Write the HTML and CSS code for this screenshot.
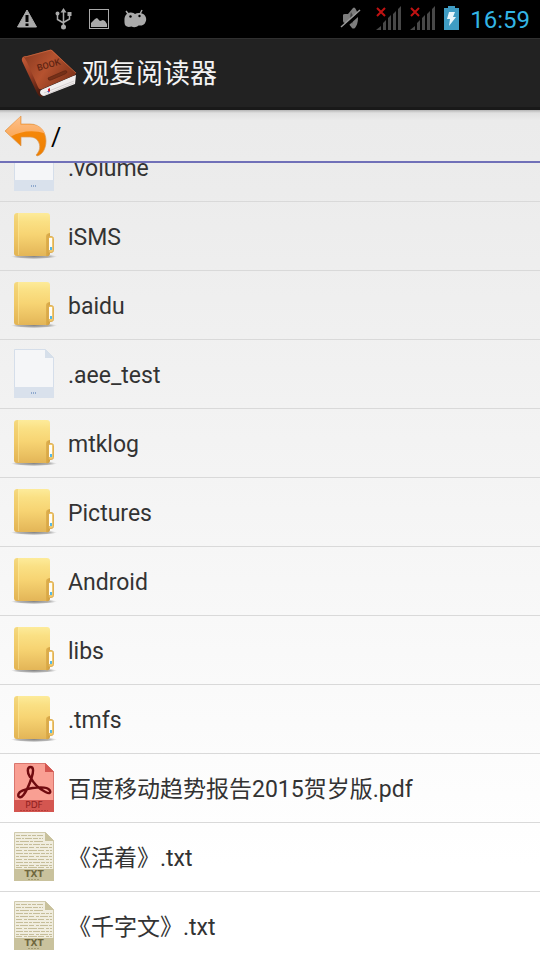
FILE: index.html
```html
<!DOCTYPE html>
<html lang="zh-CN">
<head>
<meta charset="utf-8">
<meta name="viewport" content="width=device-width, initial-scale=1">
<title>观复阅读器</title>
<link rel="stylesheet" href="styles.css">
</head>
<body>
<svg class="defs" aria-hidden="true">
  <defs>
    <linearGradient id="folderBody" x1="0" y1="0" x2="0" y2="1">
      <stop offset="0" stop-color="#fdeb9a"/><stop offset=".2" stop-color="#fae084"/><stop offset=".5" stop-color="#f7d473"/><stop offset="1" stop-color="#e3b557"/>
    </linearGradient>
    <linearGradient id="folderFlap" x1="0" y1="0" x2="1" y2="0">
      <stop offset="0" stop-color="#dca943"/><stop offset="1" stop-color="#c49238"/>
    </linearGradient>
    <radialGradient id="shadow">
      <stop offset="0" stop-color="#888"/><stop offset=".7" stop-color="#999" stop-opacity=".7"/><stop offset="1" stop-color="#aaa" stop-opacity="0"/>
    </radialGradient>
    <linearGradient id="arrowFill" x1="0" y1="0" x2="0" y2="1">
      <stop offset="0" stop-color="#f98c10"/><stop offset="1" stop-color="#ee7f00"/>
    </linearGradient>
    <linearGradient id="arrowGloss" x1="0" y1="0" x2="0" y2="1">
      <stop offset="0" stop-color="#fcc08c"/><stop offset="1" stop-color="#fba95a"/>
    </linearGradient>
    <linearGradient id="cover" x1="0" y1=".2" x2="1" y2=".7">
      <stop offset="0" stop-color="#8f3d22"/><stop offset=".45" stop-color="#b5522f"/><stop offset="1" stop-color="#7c3119"/>
    </linearGradient>
    <linearGradient id="spine" x1="0" y1="0" x2=".6" y2="1">
      <stop offset="0" stop-color="#c65c38"/><stop offset=".5" stop-color="#9c4025"/><stop offset="1" stop-color="#4f1c0f"/>
    </linearGradient>
  </defs>
  <symbol id="folder" viewBox="0 0 48 50">
    <ellipse cx="24" cy="45.500" rx="23" ry="2.500" fill="url(#shadow)"/>
    <rect x="4" y="2" width="36" height="43" rx="3" fill="url(#folderBody)"/>
    <path d="M4 6v36q0 2 2 3h2V2Q4 2 4 6z" fill="#e0ae48" opacity=".3"/>
    <path d="M8.500 3v41" stroke="#fff0a8" opacity=".4"/>
    <path d="M36 45V25q0-2 2-2.500l2-.5v20q0 3-3 3.500z" fill="url(#folderFlap)" opacity=".75"/>
    <path d="M39 25.500h2q2.500 0 2.500 2v12q0 2-2.500 2h-2z" fill="#f0c86e" stroke="#dfb055"/>
    <path d="M39 27h3v12h-3z" fill="#fffdf5"/>
    <path d="M40 36h2v3h-2z" fill="#54b8e8"/>
  </symbol>
  <symbol id="file" viewBox="0 0 48 50">
    <path d="M4.500.5h31l8 8v40h-39z" fill="#f5f6f8" stroke="#d5deea"/>
    <path d="M35 0l9 9h-9z" fill="#d6dfea"/>
    <path d="M4 38h40v11H4z" fill="#d9e1ec"/>
    <path d="M21 44h6" stroke="#8fa9ce" stroke-width="2" stroke-dasharray="1 1"/>
  </symbol>
  <symbol id="pdf" viewBox="0 0 48 50">
    <path d="M4.500.5h31l8 8v40h-39z" fill="#f99f93" stroke="#d9766e"/>
    <path d="M35 0l9 9h-9z" fill="#d45650"/>
    <path d="M4 37h40v12H4z" fill="#d45650"/>
    <path d="M20 14c-3-4-3-10 .5-10s3 5 1 11c-2 6-5 13-8 17s-6 2-5-1 7-5 14-6 15-1 17 2 0 4-4 2-11-6-15-15z" fill="none" stroke="#700b10" stroke-width="2.400" stroke-linejoin="round"/>
    <path d="M10 47.500h28" stroke="#b63e3b" stroke-dasharray="2 1"/>
  </symbol>
  <symbol id="txt" viewBox="0 0 48 50">
    <path d="M4.500.5h31l8 8v40h-39z" fill="#f0eddf" stroke="#d0caad"/>
    <g stroke="#c5bd99">
      <path d="M6 3.500h27" stroke-dasharray="4 1 6 1 3 1"/>
      <path d="M6 6.500h27" stroke-dasharray="5 1 2 1 7 1"/>
      <path d="M6 9.500h28" stroke-dasharray="3 1 9 1"/>
      <path d="M6 12.500h36M6 21.500h36M6 30.500h36" stroke-dasharray="7 1 4 1 3 1"/>
      <path d="M6 15.500h36M6 24.500h36M6 33.500h36" stroke-dasharray="3 1 8 1 5 2"/>
      <path d="M6 18.500h36M6 27.500h36M6 35.500h36" stroke-dasharray="6 2 3 1 9 1"/>
    </g>
    <path d="M35 0l9 9h-9z" fill="#c9c29d"/>
    <path d="M4 37h40v12H4z" fill="#c9c29d"/>
    <path d="M18 47.500h12" stroke="#a59c73" stroke-dasharray="2 1"/>
  </symbol>
  <symbol id="signal" viewBox="0 0 26 26">
    <path d="M0 25l5-4v4zM7 25v-7l3-3v10zM12 25V13l3-3v15zM17 25V9l3-3v19zM22 25V4l3-3v24z" fill="#484848"/>
    <path d="M1 3l8 8M9 3l-8 8" stroke="#c01212" stroke-width="2"/>
  </symbol>
</svg>

<div class="screen">
  <div class="status">
    <div class="notices">
      <svg width="24" height="24" viewBox="0 0 24 24"><path d="M12 3l9.500 17h-19z" fill="#aaa" stroke="#aaa" stroke-linejoin="round"/><path d="M10.500 8h3v7h-3zM10.500 16.500h3V19h-3z" fill="#000"/></svg>
      <svg width="24" height="24" viewBox="0 0 24 24"><g fill="none" stroke="#aaa" stroke-width="1.500"><path d="M12.500 4v16M6.500 8v4.500l6 3.500M18.500 8v4l-6 3.500"/></g><path d="M12.500 1l3 4.500h-6zM4.500 6.500a2 2 0 1 0 4 0 2 2 0 1 0-4 0M16.500 5h4v4h-4z" fill="#aaa"/><circle cx="12.500" cy="20" r="2.500" fill="#aaa"/></svg>
      <svg width="24" height="24" viewBox="0 0 24 24"><rect x="2.500" y="2.500" width="19" height="19" fill="none" stroke="#aaa"/><path d="M4 20v-4l4-4 2-1 3 3 3-1 2 1 2 3v3z" fill="#aaa"/></svg>
      <svg width="24" height="24" viewBox="0 0 24 24"><path d="M3 4l3 4M19 3l-2 4" stroke="#aaa" stroke-width="1.500"/><path d="M1.500 14C1 9 4 5 8 5.500q3 0 4 1.500 2-1.500 5-1c5 .5 7.500 5 5.500 9-1 3-4 4-7 3.500-2 2-5 2-7 1C4 21 1 19 1.500 14z" fill="#aaa"/><circle cx="7.500" cy="9.500" r="1.200"/><circle cx="16.500" cy="9" r="1.200"/></svg>
    </div>
    <div class="system">
      <svg width="28" height="26" viewBox="0 0 28 26"><path d="M3 10q0-1 2-1h3l5-6q1-1 2 0 3 4 3 10t-3 10q-2 1-3 0l-4-5H5q-2 0-2-2z" fill="#7d7d7d"/><path d="M11 7q-2 6 1 12 3-6-1-12z" fill="#444"/><path d="M2 24L21 7" stroke="#000" stroke-width="3.500"/><path d="M1 22L20 5" stroke="#999" stroke-width="1.500"/></svg>
      <svg width="26" height="26"><use href="#signal"/></svg>
      <svg width="26" height="26"><use href="#signal"/></svg>
      <svg width="16" height="26" viewBox="0 0 16 26"><path d="M4 1h7v2h4v22H0V3h4z" fill="#3f9cc3"/><path d="M5 7h6l-2 5h3l-7 9 1-7H3z" fill="#e8f5fa"/></svg>
      <time class="clock">16:59</time>
    </div>
  </div>

  <header class="appbar">
    <svg width="56" height="48" viewBox="0 0 56 48">
      <path d="M1 12Q0 8 4 7l6 4 12 28q-4 2-3 5 1 3 4 2l-2 2q-3 0-5-4z" fill="url(#spine)"/>
      <path d="M22 40l30-13 3-1-1 9-31 12q-4-1-4-4 0-2 3-3z" fill="#f1eeee"/>
      <path d="M23 44l30-12M24 46l29-12" stroke="#c4bdbd" stroke-width=".6"/>
      <path d="M3 8L28 1q3-1 4 1l23 22-1 2-33 14q-3 1-4-2L6 13z" fill="url(#cover)"/>
      <path d="M4 8l26-7 25 23" fill="none" stroke="#d06c42" stroke-width=".7"/>
      <path d="M27 29l16-7q3-1 3 1 0 1-2 2l-14 6q-3 1-3-2z" fill="#753018" stroke="#5f2412" stroke-width=".7"/>
      <path d="M27 40l2-1v4l-2-1z" fill="#d92028"/><path d="M26 42h2v2z" fill="#4a55b0"/>
      <text class="book-label" transform="translate(17 22) rotate(-16)">BOOK</text>
    </svg>
    <h1>观复阅读器</h1>
  </header>

  <nav class="path">
    <button type="button" class="back" aria-label="返回上一级">
      <svg width="44" height="44" viewBox="0 0 44 44">
        <path d="M1 17L17 2v8h9c10 0 16 8 16 17 0 8-4 14-9 15l-1-1c4-4 5-9 2-14-2-3-5-4-8-4h-9v9z" fill="url(#arrowFill)" stroke="#d99a59" stroke-width=".7"/>
        <path d="M1.500 17L16.500 2.500v8H26c8 0 13 4 15 9-12-4-25-2-34 3z" fill="url(#arrowGloss)"/>
      </svg>
    </button>
    <span class="crumb">/</span>
  </nav>

  <main class="viewport">
    <ul class="files">
      <li><a href="#"><span class="icon"><svg><use href="#file"/></svg></span><span class="name">.volume</span></a></li>
      <li><a href="#"><span class="icon"><svg><use href="#folder"/></svg></span><span class="name">iSMS</span></a></li>
      <li><a href="#"><span class="icon"><svg><use href="#folder"/></svg></span><span class="name">baidu</span></a></li>
      <li><a href="#"><span class="icon"><svg><use href="#file"/></svg></span><span class="name">.aee_test</span></a></li>
      <li><a href="#"><span class="icon"><svg><use href="#folder"/></svg></span><span class="name">mtklog</span></a></li>
      <li><a href="#"><span class="icon"><svg><use href="#folder"/></svg></span><span class="name">Pictures</span></a></li>
      <li><a href="#"><span class="icon"><svg><use href="#folder"/></svg></span><span class="name">Android</span></a></li>
      <li><a href="#"><span class="icon"><svg><use href="#folder"/></svg></span><span class="name">libs</span></a></li>
      <li><a href="#"><span class="icon"><svg><use href="#folder"/></svg></span><span class="name">.tmfs</span></a></li>
      <li><a href="#"><span class="icon"><svg><use href="#pdf"/></svg><span class="badge badge-pdf">PDF</span></span><span class="name">百度移动趋势报告2015贺岁版.pdf</span></a></li>
      <li><a href="#"><span class="icon"><svg><use href="#txt"/></svg><span class="badge badge-txt">TXT</span></span><span class="name">《活着》.txt</span></a></li>
      <li><a href="#"><span class="icon"><svg><use href="#txt"/></svg><span class="badge badge-txt">TXT</span></span><span class="name">《千字文》.txt</span></a></li>
    </ul>
  </main>
</div>
</body>
</html>
```
FILE: styles.css
```css
* {
  box-sizing: border-box;
}

body {
  margin: 0;
  font-family: Roboto, "Noto Sans CJK SC", sans-serif;
  color: #333;
}

svg {
  display: block;
  flex: none;
}

.defs {
  position: absolute;
  width: 0;
  height: 0;
}

.screen {
  display: flex;
  flex-direction: column;
  height: 100vh;
  overflow: hidden;
  background: linear-gradient(#e8e8e8, #ececec 20%, #fff 90%);
}

.status {
  display: flex;
  flex: none;
  align-items: center;
  justify-content: space-between;
  height: 38px;
  padding: 0 10px 0 15px;
  background: #000;
}

.notices,
.system {
  display: flex;
  align-items: center;
}

.notices {
  gap: 12px;
}

.system {
  gap: 8px;
}

.system svg {
  margin-bottom: 2px;
}

.clock {
  padding: 2px 0 0 2px;
  font-size: 24px;
  line-height: 36px;
  color: #33b5e5;
}

.appbar {
  display: flex;
  flex: none;
  align-items: center;
  gap: 5px;
  height: 72px;
  padding: 0 21px;
  background: #222;
  border-top: 1px solid #303030;
  border-bottom: 3px solid #191919;
}

h1 {
  margin: 0;
  padding-top: 2px;
  font-size: 27px;
  font-weight: 400;
  line-height: 36px;
  color: #f3f3f3;
}

.book-label {
  font: 500 9px Roboto, sans-serif;
  fill: #5f2412;
}

.path {
  display: flex;
  flex: none;
  align-items: center;
  gap: 3px;
  height: 53px;
  padding: 0 4px;
  font-size: 25px;
  line-height: 28px;
  color: #000;
  background: linear-gradient(#b4b4b4, #e0e0e0 3px, #ebebeb 10px, #ececec);
  border-bottom: 2px solid #7070b8;
}

.crumb {
  padding-top: 4px;
}

.back {
  padding: 0;
  background: none;
  border: 0;
}

.viewport {
  flex: 1;
  min-height: 0;
  overflow: hidden;
}

/* The list is scrolled, so its first row starts under the path bar. */
.files {
  margin: -30px 0 0;
  padding: 0;
  list-style: none;
}

.files li {
  border-bottom: 1px solid #d9d9d9;
}

.files a {
  display: flex;
  align-items: center;
  gap: 10px;
  height: 68px;
  padding: 0 10px;
  font-size: 23px;
  line-height: 32px;
  color: #333;
  text-decoration: none;
}

.name {
  padding-top: 4px;
}

.icon {
  position: relative;
}

.icon svg {
  width: 48px;
  height: 50px;
}

.badge {
  position: absolute;
  right: 0;
  bottom: 2px;
  left: 0;
  font: 9px/12px "DejaVu Sans", sans-serif;
  text-align: center;
}

.badge-pdf {
  color: #8f1f20;
}

.badge-txt {
  font-weight: 700;
  color: #70683f;
}
```
